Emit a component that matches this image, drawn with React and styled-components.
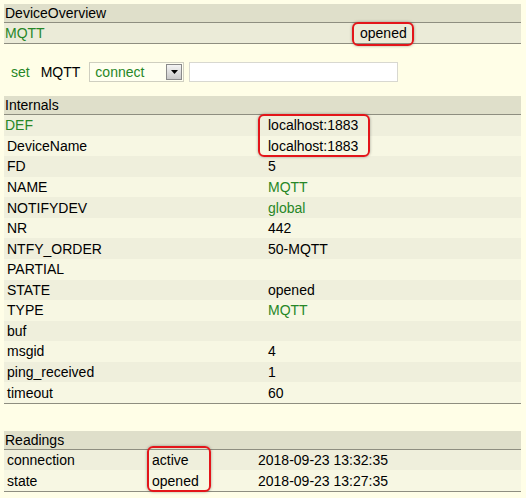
import React from 'react';
import styled, { createGlobalStyle } from 'styled-components';

const Global = createGlobalStyle`
  html, body { margin: 0; padding: 0; background: #fffee7; }
  body { font-family: "Liberation Sans", Arial, Helvetica, sans-serif; font-size: 14px; color: #000; }
`;

const Page = styled.div`
  position: relative;
  width: 526px;
  height: 498px;
  padding: 4px 5px 0 4px;
  box-sizing: border-box;
  overflow: hidden;
`;

const Block = styled.div`
  width: 517px;
  margin-top: ${p => p.$mt || 0}px;
  border-bottom: 1px solid #8e8e80;
`;

const Header = styled.div`
  height: 18px;
  line-height: 18px;
  background: #dfdfca;
  border-bottom: 1px solid #8e8e80;
  padding-left: 1px;
`;

const Row = styled.div`
  display: grid;
  grid-template-columns: ${p => p.$cols};
  height: ${p => p.$h || 20.57}px;
  align-items: center;
  background: ${p => (p.$tone === 'state' ? '#ebebd8' : p.$tone === 'alt' ? '#f7f7e3' : '#efefdc')};
`;

const Cell = styled.div`
  padding-left: ${p => (p.$pl ?? 3)}px;
  color: ${p => (p.$green ? '#278727' : '#000')};
  white-space: nowrap;
`;

const SetRow = styled.div`
  display: flex;
  align-items: center;
  height: 20px;
  margin-top: 18px;
  padding-left: 7px;
`;

const SetLabel = styled.span`
  color: #278727;
  margin-right: 11px;
`;

const SetDevice = styled.span`
  margin-right: 9px;
`;

const SelectBox = styled.div`
  box-sizing: border-box;
  width: 95px;
  height: 20px;
  border: 1px solid #cfcfc0;
  background: #fffff0;
  display: flex;
  align-items: center;
  justify-content: space-between;
  padding: 0 1px 0 5px;
  color: #278727;
  margin-right: 5px;
`;

const ArrowButton = styled.div`
  box-sizing: border-box;
  width: 16px;
  height: 16px;
  border: 1px solid #8a8a8a;
  background: linear-gradient(#f4f4f4, #c8c8c8);
  display: flex;
  align-items: center;
  justify-content: center;
`;

const TextInput = styled.div`
  box-sizing: border-box;
  width: 209px;
  height: 20px;
  border: 1px solid #d8d8d0;
  background: #fff;
`;

const Mark = styled.div`
  position: absolute;
  box-sizing: border-box;
  border: 2px solid #e3151a;
  border-radius: 6px;
  box-shadow: 0 0 3px rgba(0, 0, 0, 0.35);
  pointer-events: none;
`;

const internals = [
  ['DEF', 'localhost:1883', true, false],
  ['DeviceName', 'localhost:1883'],
  ['FD', '5'],
  ['NAME', 'MQTT', false, true],
  ['NOTIFYDEV', 'global', false, true],
  ['NR', '442'],
  ['NTFY_ORDER', '50-MQTT'],
  ['PARTIAL', ''],
  ['STATE', 'opened'],
  ['TYPE', 'MQTT', false, true],
  ['buf', ''],
  ['msgid', '4'],
  ['ping_received', '1'],
  ['timeout', '60'],
];

const readings = [
  ['connection', 'active', '2018-09-23 13:32:35'],
  ['state', 'opened', '2018-09-23 13:27:35'],
];

export default function App() {
  return (
    <>
      <Global />
      <Page>
        <Block>
          <Header>DeviceOverview</Header>
          <Row $cols="355px 1fr" $h={20} $tone="state">
            <Cell $pl={1} $green>MQTT</Cell>
            <Cell $pl={1}>opened</Cell>
          </Row>
        </Block>

        <SetRow>
          <SetLabel>set</SetLabel>
          <SetDevice>MQTT</SetDevice>
          <SelectBox>
            <span>connect</span>
            <ArrowButton>
              <svg width="7" height="4" viewBox="0 0 7 4">
                <path d="M0 0h7L3.5 4z" fill="#000" />
              </svg>
            </ArrowButton>
          </SelectBox>
          <TextInput />
        </SetRow>

        <Block $mt={14}>
          <Header>Internals</Header>
          {internals.map(([k, v, isDef, green], i) => (
            <Row key={k} $cols="261px 1fr" $tone={i % 2 ? 'alt' : 'base'}>
              <Cell $pl={isDef ? 1 : 3} $green={isDef}>{k}</Cell>
              <Cell $green={green}>{v}</Cell>
            </Row>
          ))}
        </Block>

        <Block $mt={27}>
          <Header>Readings</Header>
          {readings.map(([k, v, t], i) => (
            <Row key={k} $cols="145px 106px 1fr" $h={20.5} $tone={i % 2 ? 'alt' : 'base'}>
              <Cell>{k}</Cell>
              <Cell>{v}</Cell>
              <Cell>{t}</Cell>
            </Row>
          ))}
        </Block>

        <Mark style={{ left: 352, top: 22, width: 62, height: 24 }} />
        <Mark style={{ left: 258, top: 114, width: 112, height: 43 }} />
        <Mark style={{ left: 147, top: 446, width: 64, height: 46 }} />
      </Page>
    </>
  );
}
